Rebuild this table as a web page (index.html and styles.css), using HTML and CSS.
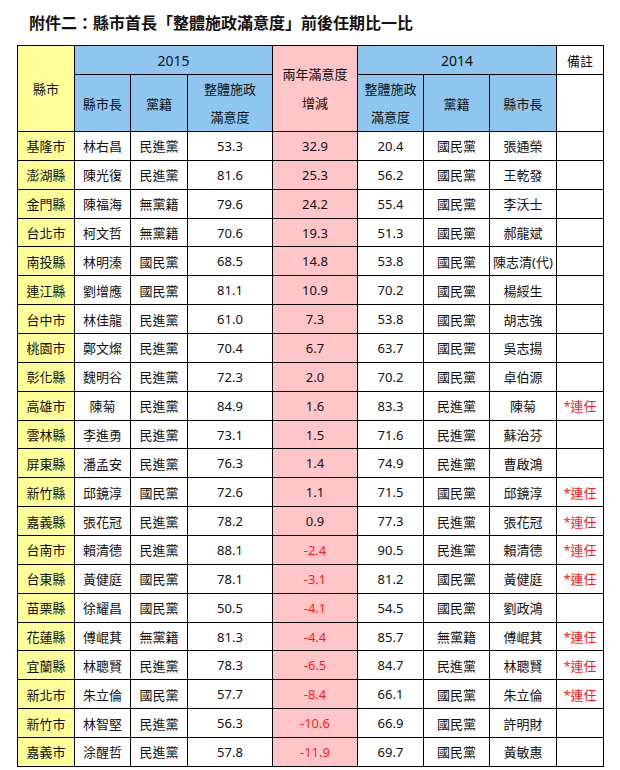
FILE: index.html
```html
<!DOCTYPE html>
<html lang="zh-Hant">
<head>
<meta charset="utf-8">
<link rel="stylesheet" href="styles.css">
</head>
<body>
<h1 class="title">附件二：縣市首長「整體施政滿意度」前後任期比一比</h1>
<table class="grid">
<colgroup>
<col class="c-city"><col class="c-name"><col class="c-party"><col class="c-score">
<col class="c-diff"><col class="c-score14"><col class="c-party14"><col class="c-name14"><col class="c-note">
</colgroup>
<thead>
<tr class="h1">
<th rowspan="2" class="yellow">縣市</th>
<th colspan="3" class="blue year">2015</th>
<th rowspan="2" class="pink tall">兩年滿意度<br>增減</th>
<th colspan="3" class="blue year">2014</th>
<th class="white">備註</th>
</tr>
<tr class="h2">
<th class="blue">縣市長</th>
<th class="blue">黨籍</th>
<th class="blue two">整體施政<br>滿意度</th>
<th class="blue two">整體施政<br>滿意度</th>
<th class="blue">黨籍</th>
<th class="blue">縣市長</th>
<th class="white"></th>
</tr>
</thead>
<tbody>
<tr><td class="yellow">基隆市</td><td>林右昌</td><td>民進黨</td><td>53.3</td><td class="pink">32.9</td><td>20.4</td><td>國民黨</td><td>張通榮</td><td></td></tr>
<tr><td class="yellow">澎湖縣</td><td>陳光復</td><td>民進黨</td><td>81.6</td><td class="pink">25.3</td><td>56.2</td><td>國民黨</td><td>王乾發</td><td></td></tr>
<tr><td class="yellow">金門縣</td><td>陳福海</td><td>無黨籍</td><td>79.6</td><td class="pink">24.2</td><td>55.4</td><td>國民黨</td><td>李沃士</td><td></td></tr>
<tr><td class="yellow">台北市</td><td>柯文哲</td><td>無黨籍</td><td>70.6</td><td class="pink">19.3</td><td>51.3</td><td>國民黨</td><td>郝龍斌</td><td></td></tr>
<tr><td class="yellow">南投縣</td><td>林明溱</td><td>國民黨</td><td>68.5</td><td class="pink">14.8</td><td>53.8</td><td>國民黨</td><td>陳志清(代)</td><td></td></tr>
<tr><td class="yellow">連江縣</td><td>劉增應</td><td>國民黨</td><td>81.1</td><td class="pink">10.9</td><td>70.2</td><td>國民黨</td><td>楊綏生</td><td></td></tr>
<tr><td class="yellow">台中市</td><td>林佳龍</td><td>民進黨</td><td>61.0</td><td class="pink">7.3</td><td>53.8</td><td>國民黨</td><td>胡志強</td><td></td></tr>
<tr><td class="yellow">桃園市</td><td>鄭文燦</td><td>民進黨</td><td>70.4</td><td class="pink">6.7</td><td>63.7</td><td>國民黨</td><td>吳志揚</td><td></td></tr>
<tr><td class="yellow">彰化縣</td><td>魏明谷</td><td>民進黨</td><td>72.3</td><td class="pink">2.0</td><td>70.2</td><td>國民黨</td><td>卓伯源</td><td></td></tr>
<tr><td class="yellow">高雄市</td><td>陳菊</td><td>民進黨</td><td>84.9</td><td class="pink">1.6</td><td>83.3</td><td>民進黨</td><td>陳菊</td><td class="red">*連任</td></tr>
<tr><td class="yellow">雲林縣</td><td>李進勇</td><td>民進黨</td><td>73.1</td><td class="pink">1.5</td><td>71.6</td><td>民進黨</td><td>蘇治芬</td><td></td></tr>
<tr><td class="yellow">屏東縣</td><td>潘孟安</td><td>民進黨</td><td>76.3</td><td class="pink">1.4</td><td>74.9</td><td>民進黨</td><td>曹啟鴻</td><td></td></tr>
<tr><td class="yellow">新竹縣</td><td>邱鏡淳</td><td>國民黨</td><td>72.6</td><td class="pink">1.1</td><td>71.5</td><td>國民黨</td><td>邱鏡淳</td><td class="red">*連任</td></tr>
<tr><td class="yellow">嘉義縣</td><td>張花冠</td><td>民進黨</td><td>78.2</td><td class="pink">0.9</td><td>77.3</td><td>民進黨</td><td>張花冠</td><td class="red">*連任</td></tr>
<tr><td class="yellow">台南市</td><td>賴清德</td><td>民進黨</td><td>88.1</td><td class="pink red">-2.4</td><td>90.5</td><td>民進黨</td><td>賴清德</td><td class="red">*連任</td></tr>
<tr><td class="yellow">台東縣</td><td>黃健庭</td><td>國民黨</td><td>78.1</td><td class="pink red">-3.1</td><td>81.2</td><td>國民黨</td><td>黃健庭</td><td class="red">*連任</td></tr>
<tr><td class="yellow">苗栗縣</td><td>徐耀昌</td><td>國民黨</td><td>50.5</td><td class="pink red">-4.1</td><td>54.5</td><td>國民黨</td><td>劉政鴻</td><td></td></tr>
<tr><td class="yellow">花蓮縣</td><td>傅崐萁</td><td>無黨籍</td><td>81.3</td><td class="pink red">-4.4</td><td>85.7</td><td>無黨籍</td><td>傅崐萁</td><td class="red">*連任</td></tr>
<tr><td class="yellow">宜蘭縣</td><td>林聰賢</td><td>民進黨</td><td>78.3</td><td class="pink red">-6.5</td><td>84.7</td><td>民進黨</td><td>林聰賢</td><td class="red">*連任</td></tr>
<tr><td class="yellow">新北市</td><td>朱立倫</td><td>國民黨</td><td>57.7</td><td class="pink red">-8.4</td><td>66.1</td><td>國民黨</td><td>朱立倫</td><td class="red">*連任</td></tr>
<tr><td class="yellow">新竹市</td><td>林智堅</td><td>民進黨</td><td>56.3</td><td class="pink red">-10.6</td><td>66.9</td><td>國民黨</td><td>許明財</td><td></td></tr>
<tr><td class="yellow">嘉義市</td><td>涂醒哲</td><td>民進黨</td><td>57.8</td><td class="pink red">-11.9</td><td>69.7</td><td>國民黨</td><td>黃敏惠</td><td></td></tr>
</tbody>
</table>
</body>
</html>
```
FILE: styles.css
```css
html, body {
  margin: 0;
  padding: 0;
  background: #ffffff;
}
body {
  font-family: "Noto Sans", "Noto Sans CJK TC", sans-serif;
  color: #111111;
}
.title {
  margin: 0;
  padding: 12px 0 0 29px;
  height: 45px;
  box-sizing: border-box;
  font-family: "Noto Sans CJK TC", sans-serif;
  font-size: 16px;
  line-height: 20px;
  font-weight: bold;
  color: #111111;
}
.grid {
  margin: 0 0 0 17px;
  border-collapse: collapse;
  table-layout: fixed;
  width: 586px;
  font-size: 13px;
}
.grid th, .grid td {
  border: 1px solid #000000;
  padding: 0;
  text-align: center;
  vertical-align: middle;
  font-weight: normal;
  white-space: nowrap;
  overflow: hidden;
}
.c-city { width: 57px; }
.c-name { width: 56px; }
.c-party { width: 57px; }
.c-score { width: 85px; }
.c-diff { width: 85px; }
.c-score14 { width: 66px; }
.c-party14 { width: 66px; }
.c-name14 { width: 67px; }
.c-note { width: 47px; }
.h1 { height: 29px; }
.h2 { height: 57px; }
.year { font-size: 14px; }
.two { line-height: 28px; }
.tall { line-height: 29px; }
.grid tbody tr { height: 28.86px; }
.yellow { background: #ffff99; }
.blue { background: #8ec6f0; }
.pink { background: #ffc5c7; }
.white { background: #ffffff; }
.red { color: #ff1a1a; }
```
